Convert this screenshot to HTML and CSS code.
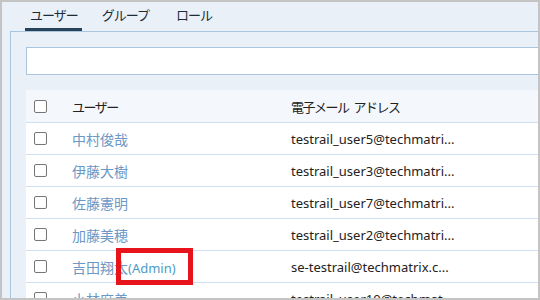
FILE: index.html
```html
<!DOCTYPE html>
<html lang="ja">
<head>
<meta charset="utf-8">
<link rel="stylesheet" href="styles.css">
</head>
<body>
<div class="frame">
  <div class="tabs">
    <div class="tab active">ユーザー</div>
    <div class="tab">グループ</div>
    <div class="tab">ロール</div>
  </div>
  <div class="panel">
    <div class="search"></div>
    <div class="table">
      <div class="row head">
        <span class="cb"></span><span class="name kana">ユーザー</span><span class="email kana">電子メール アドレス</span>
      </div>
      <div class="row"><span class="cb"></span><span class="name link">中村俊哉</span><span class="email">testrail_user5@techmatri...</span></div>
      <div class="row"><span class="cb"></span><span class="name link">伊藤大樹</span><span class="email">testrail_user3@techmatri...</span></div>
      <div class="row"><span class="cb"></span><span class="name link">佐藤憲明</span><span class="email">testrail_user7@techmatri...</span></div>
      <div class="row"><span class="cb"></span><span class="name link">加藤美穂</span><span class="email">testrail_user2@techmatri...</span></div>
      <div class="row"><span class="cb"></span><span class="name link">吉田翔太<span class="admin">(Admin)</span><span class="mark"></span></span><span class="email">se-testrail@techmatrix.c...</span></div>
      <div class="row"><span class="cb"></span><span class="name link">小林麻美</span><span class="email">testrail_user10@techmat...</span></div>
    </div>
  </div>
</div>
</body>
</html>
```

FILE: styles.css
```css
html, body { margin: 0; padding: 0; }
body { font-family: "Noto Sans", "Noto Sans CJK JP", sans-serif; }
.frame {
  width: 540px; height: 300px; box-sizing: border-box;
  border: 2px solid #c4c4c4; background: #e9f0f7; overflow: hidden;
}
.tabs { display: flex; height: 29px; padding-left: 23px; }
.tab {
  font-size: 13px; color: #1d2b38; padding: 0 5px; line-height: 27px; letter-spacing: -1px;
  border-bottom: 3px solid transparent; box-sizing: border-box; height: 29px;
}
.tab.active { border-bottom-color: #27435a; padding: 0 4px 0 5px; margin-right: 15px; }
.tab.active + .tab { margin-right: 17px; }
.panel {
  margin-left: 8px; width: 700px; border-left: 1px solid #aac6de; border-top: 1px solid #aac6de;
  padding: 15px 0 0 15px; height: 400px;
}
.search { height: 26px; background: #fff; border: 1px solid #aac6de; }
.table { margin-top: 15px; background: #fff; }
.row {
  display: flex; align-items: center; height: 32px; box-sizing: border-box;
  border-top: 1px solid #cddff0; font-size: 13px; color: #222;
}
.row.head { border-top: none; height: 32px; background: #f4f7fb; }
.kana { letter-spacing: -1.5px; word-spacing: 3px; }
.cb {
  width: 11px; height: 11px; border: 1px solid #767676; border-radius: 2px;
  margin-left: 8px; flex: none; background: #fff;
}
.name { margin-left: 25px; width: 219px; position: relative; }
.link { color: #6b98c5; font-size: 14px; }
.admin { color: #4b9cc4; font-size: 13px; }
.email { color: #222; }
.mark {
  position: absolute; left: 44px; top: -9px; width: 67px; height: 27px;
  border: 5px solid #e8141c;
}
```
